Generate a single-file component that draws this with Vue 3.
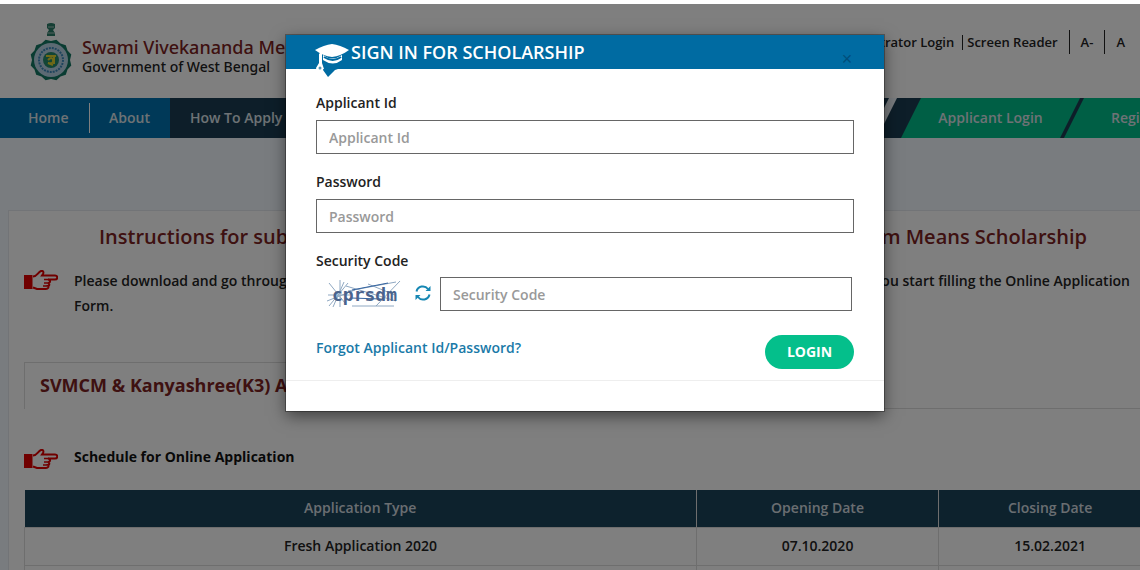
<script setup>
import { ref } from 'vue'

const applicantId = ref('')
const password = ref('')
const code = ref('')

const points = Array.from({ length: 24 }, (_, i) => {
  const a = (i * Math.PI) / 12
  const r = i % 2 ? 21 : 19
  return `${(21 + r * Math.cos(a)).toFixed(1)},${(37 + r * Math.sin(a)).toFixed(1)}`
}).join(' ')

const rows = [
  ['Fresh Application 2020', '07.10.2020', '15.02.2021'],
  ['Renewal Application 2020', '07.10.2020', '15.02.2021'],
]
</script>

<template>
  <div class="page">
    <div class="site">
      <header class="top">
        <svg class="emblem" viewBox="0 0 42 58" aria-hidden="true">
          <path d="M17 1q4-2 8 0v4l-2 2 2 3v3h-8v-3l2-3-2-2z" fill="#2b7c68" />
          <path d="M18 4h6M17 10h8" stroke="#a9c5be" />
          <polygon :points="points" fill="#147864" />
          <circle cx="21" cy="37" r="17" fill="#b9d4e6" />
          <circle cx="21" cy="37" r="12" fill="none" stroke="#3c89bb" stroke-width="2" stroke-dasharray="2 1" />
          <circle cx="21" cy="37" r="8" fill="#258a6c" />
          <path d="M16 33h10M18 37q4-4 5 0t-5 3l5 2M24 33v8" fill="none" stroke="#e0d22e" stroke-width="2" />
        </svg>
        <div class="brand">
          <div class="brand-name">Swami Vivekananda Merit cum Means</div>
          <div class="brand-gov">Government of West Bengal</div>
        </div>
        <div class="tools">
          <a href="#">Administrator Login</a>
          <i class="rule short"></i>
          <a href="#">Screen Reader</a>
          <i class="rule"></i>
          <a href="#" class="size">A-</a>
          <i class="rule"></i>
          <a href="#" class="size">A</a>
        </div>
      </header>

      <nav class="nav">
        <a href="#" class="blue home">Home</a>
        <a href="#" class="blue about">About</a>
        <a href="#" class="how">How To Apply</a>
        <div class="actions">
          <i class="stripe"></i>
          <a href="#" class="slant">Applicant Login</a>
          <a href="#" class="slant">Registration</a>
        </div>
      </nav>

      <main class="card">
        <h1><span>Instructions for submission</span><span>Merit cum Means Scholarship</span></h1>
        <div class="note">
          <svg class="hand" viewBox="0 0 34 20" aria-hidden="true">
            <path d="M0 5h8.500v14H0z" fill="#e00000" />
            <path d="M9 6.500c4 0 5-4.500 8-5.500 2-.5 3 1 2 3l-1 1.500h13c3 0 3 4 0 4h-7c3 .5 2.500 3.500 0 3.500 2 1 1.500 3 0 3 1 1.500 0 3-2 3H13l-4-1.500" fill="none" stroke="#e00000" stroke-width="2" />
            <path d="M20 9.500h5M20 13h5M19 16h4" stroke="#e00000" stroke-width="1.500" />
          </svg>
          <p class="guide">
            <span>Please download and go through the</span>
            <span>before you start filling the Online Application</span>
            <span class="wrap">Form.</span>
          </p>
        </div>
        <div class="tabs"><h2>SVMCM &amp; Kanyashree(K3) Applicants</h2></div>
        <div class="note schedule">
          <svg class="hand" viewBox="0 0 34 20" aria-hidden="true">
            <path d="M0 5h8.500v14H0z" fill="#e00000" />
            <path d="M9 6.500c4 0 5-4.500 8-5.500 2-.5 3 1 2 3l-1 1.500h13c3 0 3 4 0 4h-7c3 .5 2.500 3.500 0 3.500 2 1 1.500 3 0 3 1 1.500 0 3-2 3H13l-4-1.500" fill="none" stroke="#e00000" stroke-width="2" />
            <path d="M20 9.500h5M20 13h5M19 16h4" stroke="#e00000" stroke-width="1.500" />
          </svg>
          <h3>Schedule for Online Application</h3>
        </div>
        <table>
          <thead>
            <tr><th class="type">Application Type</th><th class="open">Opening Date</th><th>Closing Date</th></tr>
          </thead>
          <tbody>
            <tr v-for="row in rows" :key="row[0]"><td v-for="(cell, i) in row" :key="i">{{ cell }}</td></tr>
          </tbody>
        </table>
      </main>
    </div>

    <div class="backdrop">
      <form class="modal" role="dialog" aria-labelledby="modal-title" @submit.prevent>
        <div class="modal-head">
          <svg class="cap" viewBox="0 0 34 34" aria-hidden="true">
            <path d="M8 21h18v4l-6 2-7 7-5-7z" fill="#006ba2" />
            <path d="M17 1q8 1 17 6-8 6-17 7Q8 13 0 7q9-5 17-6z" fill="#fff" />
            <path d="M8 12q9 7 19 0v5q-9 7-19 0z" fill="#fff" />
            <path d="M9 14q9 6 17 0" fill="none" stroke="#006ba2" stroke-width="2" />
            <path d="M6 9 4 11v9L1 25l1 4 4-2 3-1-2-6V10z" fill="#fff" />
            <circle cx="5" cy="25" r="1.500" fill="#5594b4" />
          </svg>
          <div id="modal-title" class="modal-title">SIGN IN FOR SCHOLARSHIP</div>
          <button type="button" class="close" aria-label="Close">×</button>
        </div>
        <div class="modal-body">
          <label for="aid">Applicant Id</label>
          <input id="aid" v-model="applicantId" type="text" placeholder="Applicant Id" />
          <label for="pwd">Password</label>
          <input id="pwd" v-model="password" type="password" placeholder="Password" />
          <label for="code">Security Code</label>
          <div class="code-row">
            <svg class="captcha" viewBox="0 0 76 32" role="img" aria-label="Security code image">
              <g fill="none" stroke="#8fa8c2">
                <path d="M3 5l16 20M14 2v27M2 17h22M3 28L22 5M1 23l28-11M7 29l11-25M22 13l48-9M26 28h42M50 28l24-25M42 6l27 11M20 8l50 15" />
                <path d="M26 12l36-7M25 20l30 1" stroke="#3564a0" />
              </g>
              <text x="6" y="23" class="captcha-text">cprsdm</text>
            </svg>
            <button type="button" class="refresh" aria-label="Refresh code">
              <svg viewBox="0 0 16 16" aria-hidden="true">
                <path d="M1.500 6.500A6.500 6.500 0 0 1 13 4M14.500 9.500A6.500 6.500 0 0 1 3 12" fill="none" stroke="#1687b3" stroke-width="2" />
                <path d="M15.500 1v5h-5zM.5 15v-5h5z" fill="#1687b3" />
              </svg>
            </button>
            <input id="code" v-model="code" type="text" placeholder="Security Code" />
          </div>
          <div class="submit">
            <a href="#">Forgot Applicant Id/Password?</a>
            <button type="submit" class="login">LOGIN</button>
          </div>
        </div>
        <div class="modal-foot"></div>
      </form>
    </div>
  </div>
</template>

<style>
body { background: #fff; }
</style>

<style scoped>
* { box-sizing: border-box; }
.page {
  position: relative;
  height: 100vh;
  overflow: hidden;
  padding-top: 4px;
  font-family: "Open Sans", "Noto Sans", sans-serif;
  font-size: 14px;
  font-weight: 600;
  line-height: 20px;
  color: #222;
}
a { color: inherit; text-decoration: none; }
.site { background: #f2f9ff; }
.top { display: flex; height: 94px; padding: 19px 15px 0 30px; background: #fff; }
.emblem { width: 42px; height: 58px; flex: none; }
.brand { padding: 14px 0 0 10px; flex: none; font-family: "Noto Sans", sans-serif; font-weight: 500; line-height: 20px; }
.brand-name { font-size: 18px; color: #7d2222; }
.brand-gov { font-size: 14px; }
.tools { display: flex; align-items: center; height: 26px; margin: 6px 0 0 auto; font-size: 13px; }
.rule { width: 1px; height: 24px; background: #222; margin: 0 11px; }
.rule.short { height: 15px; margin: 0 4px 0 8px; }

.nav { display: flex; height: 40px; line-height: 40px; background: #1b3d52; color: #dce4ea; overflow: hidden; }
.blue { background: #0073b0; display: flex; align-items: center; }
.home { padding-left: 28px; width: 89px; }
.about { width: 81px; padding-left: 19px; line-height: 30px; }
.about::before { content: ""; width: 1px; height: 30px; background: #fff; margin: 0 19px 0 -19px; }
.how { padding-left: 20px; }
.actions { display: flex; margin: 0 -54px 0 auto; }
.stripe { width: 28px; margin-right: 4px; background: #f2f9ff; clip-path: polygon(20px 0, 100% 0, 8px 100%, 0 100%); }
.slant { width: 179px; text-align: center; background: #00bf8b; clip-path: polygon(20px 0, 100% 0, calc(100% - 20px) 100%, 0 100%); }
.slant + .slant { width: 130px; margin-left: -16px; text-align: left; padding-left: 47px; }

.card { margin: 72px -38px 0 8px; padding: 0 15px 40px; background: #fff; border: 1px solid #e4e8ee; }
h1, h2, h3, p { margin: 0; }
h1 { display: flex; justify-content: space-between; padding: 14px 75px 0 75px; font-size: 20px; line-height: 24px; font-weight: 600; color: #7d2222; }
.note { display: flex; margin-top: 19px; }
.hand { width: 34px; height: 20px; flex: none; margin: 2px 16px 0 0; }
.guide { display: flex; flex-wrap: wrap; justify-content: space-between; flex: 1; padding-right: 32px; line-height: 25px; }
.wrap { width: 100%; }
.tabs { margin-top: 44px; border-bottom: 1px solid #ddd; }
h2 { width: 45%; height: 47px; margin-bottom: -1px; padding: 0 15px; border: 1px solid #ddd; border-bottom: 0; background: #fff; font-size: 18px; line-height: 44px; font-weight: 700; color: #7d2222; white-space: nowrap; overflow: hidden; }
.schedule { margin-top: 38px; }
h3 { font-size: 14px; line-height: 20px; font-weight: 700; color: #111; }
table { width: 100%; margin-top: 21px; border-collapse: collapse; table-layout: fixed; text-align: center; }
th { height: 37px; padding: 0; background: #1b445a; color: #d5dde2; font-weight: 600; border-right: 1px solid #ddd; }
td { height: 38px; padding: 0; border: 1px solid #ddd; }
.type { width: 59.1%; }
.open { width: 21.3%; }

.backdrop { position: absolute; inset: 4px 0 0; display: flex; justify-content: center; align-items: flex-start; padding: 31px 0 0 30px; background: rgba(0, 0, 0, 0.5); }
.modal { width: 598px; background: #fff; box-shadow: 0 0 0 1px rgba(0, 0, 0, 0.3), 0 5px 15px rgba(0, 0, 0, 0.5); }
.modal-head { display: flex; height: 34px; padding: 0 30px 0 29px; background: #006ba2; }
.cap { width: 34px; height: 34px; margin-top: 8px; flex: none; }
.modal-title { padding-left: 2px; font-size: 18px; line-height: 35px; font-weight: 600; color: #fff; }
.close { margin: 14px 0 0 auto; padding: 0; width: 14px; height: 20px; border: 0; background: none; color: #004e7a; font-size: 18px; line-height: 20px; }
.modal-body { display: flex; flex-direction: column; padding: 24px 30px 11px; }
label { margin-bottom: 7px; }
input { width: 100%; height: 34px; padding: 0 12px; border: 1px solid #666; border-radius: 0; background: #fff; font: inherit; color: #333; outline: 0; }
.modal-body > input { margin-bottom: 18px; }
input::placeholder { color: #999; opacity: 1; }
.code-row { display: flex; align-items: center; height: 34px; padding-right: 2px; margin-top: -1px; }
.captcha { width: 76px; height: 32px; flex: none; margin-left: 10px; }
.captcha-text { font: 700 18px "DejaVu Sans Mono", monospace; fill: #4a638c; }
.refresh { width: 16px; height: 16px; margin: 0 9px 3px 13px; padding: 0; border: 0; background: none; flex: none; }
.refresh svg { display: block; width: 16px; height: 16px; }
.submit { display: flex; justify-content: space-between; align-items: flex-start; margin-top: 24px; }
.submit a { margin-top: 3px; color: #1a7aa8; }
.login { width: 89px; height: 34px; padding: 0; border: 0; border-radius: 17px; background: #04bf8b; color: #fff; font: inherit; font-weight: 700; }
.modal-foot { height: 31px; border-top: 1px solid #eee; }
</style>
